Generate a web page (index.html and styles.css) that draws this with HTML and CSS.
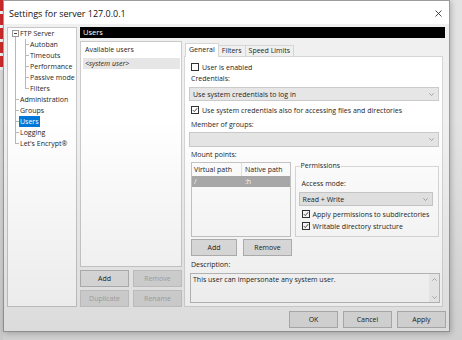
FILE: index.html
```html
<!DOCTYPE html>
<html lang="en">
<head>
    <meta charset="UTF-8">
    <meta name="viewport" content="width=device-width, initial-scale=1.0">
    <title>Settings for server 127.0.0.1</title>
    <link rel="stylesheet" href="styles.css">
</head>
<body>
    <div class="desk-strip"></div>
    <div class="window">
        <div class="titlebar">
            <span class="title">Settings for server 127.0.0.1</span>
            <svg class="close" width="7" height="7" viewBox="0 0 7 7"><path d="M0.5 0.5L6.5 6.5M6.5 0.5L0.5 6.5" stroke="#333" stroke-width="0.9"/></svg>
        </div>
        <div class="content">
            <div class="tree">
                <div class="row root"><span class="expander"></span>FTP Server</div>
                <div class="row child">Autoban</div>
                <div class="row child">Timeouts</div>
                <div class="row child">Performance</div>
                <div class="row child">Passive mode</div>
                <div class="row child last-child">Filters</div>
                <div class="row top">Administration</div>
                <div class="row top">Groups</div>
                <div class="row top"><span class="selected">Users</span></div>
                <div class="row top">Logging</div>
                <div class="row top last">Let's Encrypt®</div>
            </div>
            <div class="main">
                <div class="page-header">Users</div>
                <div class="page">
                    <div class="users-col">
                        <div class="user-list">
                            <div class="list-title">Available users</div>
                            <div class="list-item">&lt;system user&gt;</div>
                        </div>
                        <div class="btn-grid">
                            <button class="btn">Add</button>
                            <button class="btn" disabled>Remove</button>
                            <button class="btn" disabled>Duplicate</button>
                            <button class="btn" disabled>Rename</button>
                        </div>
                    </div>
                    <div class="tabs-col">
                        <div class="tabs">
                            <div class="tab active">General</div>
                            <div class="tab">Filters</div>
                            <div class="tab">Speed Limits</div>
                        </div>
                        <div class="tab-panel">
                            <div class="check"><span class="box"></span>User is enabled</div>
                            <div class="label gap-2">Credentials:</div>
                            <div class="select gap-3">
                                <span>Use system credentials to log in</span>
                                <svg class="chev" width="5" height="3" viewBox="0 0 5 3"><path d="M0.3 0.3L2.5 2.5L4.7 0.3" fill="none" stroke="#8a8a8a" stroke-width="0.7"/></svg>
                            </div>
                            <div class="check gap-4"><span class="box"><svg width="6" height="6" viewBox="0 0 6 6"><path d="M0.8 3.1L2.3 4.6L5.2 1.2" fill="none" stroke="#333" stroke-width="0.9"/></svg></span>Use system credentials also for accessing files and directories</div>
                            <div class="label gap-5">Member of groups:</div>
                            <div class="select gap-2 tall">
                                <span></span>
                                <svg class="chev" width="5" height="3" viewBox="0 0 5 3"><path d="M0.3 0.3L2.5 2.5L4.7 0.3" fill="none" stroke="#8a8a8a" stroke-width="0.7"/></svg>
                            </div>
                            <div class="label gap-3">Mount points:</div>
                            <div class="mount gap-2">
                                <div class="mount-table">
                                    <div class="mt-head"><span class="col1">Virtual path</span><span class="col2">Native path</span></div>
                                    <div class="mt-row selected"><span class="col1">/</span><span class="col2">:h</span></div>
                                </div>
                                <fieldset class="perms">
                                    <legend>Permissions</legend>
                                    <div class="label access">Access mode:</div>
                                    <div class="select perm-select">
                                        <span>Read + Write</span>
                                        <svg class="chev" width="5" height="3" viewBox="0 0 5 3"><path d="M0.3 0.3L2.5 2.5L4.7 0.3" fill="none" stroke="#8a8a8a" stroke-width="0.7"/></svg>
                                    </div>
                                    <div class="check perm-check"><span class="box"><svg width="6" height="6" viewBox="0 0 6 6"><path d="M0.8 3.1L2.3 4.6L5.2 1.2" fill="none" stroke="#333" stroke-width="0.9"/></svg></span>Apply permissions to subdirectories</div>
                                    <div class="check perm-check2"><span class="box"><svg width="6" height="6" viewBox="0 0 6 6"><path d="M0.8 3.1L2.3 4.6L5.2 1.2" fill="none" stroke="#333" stroke-width="0.9"/></svg></span>Writable directory structure</div>
                                </fieldset>
                            </div>
                            <div class="mount-btns">
                                <button class="btn add">Add</button>
                                <button class="btn remove">Remove</button>
                            </div>
                            <div class="label gap-4">Description:</div>
                            <div class="description">
                                <span class="desc-text">This user can impersonate any system user.</span>
                                <div class="scroll">
                                    <svg width="5" height="3" viewBox="0 0 5 3"><path d="M0.3 2.7L2.5 0.5L4.7 2.7" fill="none" stroke="#9a9a9a" stroke-width="0.7"/></svg>
                                    <svg width="5" height="3" viewBox="0 0 5 3"><path d="M0.3 0.3L2.5 2.5L4.7 0.3" fill="none" stroke="#9a9a9a" stroke-width="0.7"/></svg>
                                </div>
                            </div>
                        </div>
                    </div>
                </div>
            </div>
        </div>
        <div class="footer">
            <button class="btn wide">OK</button>
            <button class="btn wide">Cancel</button>
            <button class="btn wide">Apply</button>
        </div>
    </div>
</body>
</html>
```

FILE: styles.css
```css
* {
    box-sizing: border-box;
}
body {
    margin: 0;
    width: 462px;
    height: 340px;
    overflow: hidden;
    position: relative;
    display: flex;
    align-items: flex-start;
    background: #e3e3e3;
    font-family: "Open Sans", sans-serif;
    font-size: 7px;
    color: #1e1e1e;
}
body::after {
    content: "";
    position: absolute;
    inset: 0;
    pointer-events: none;
    background: linear-gradient(to bottom, rgba(0, 0, 0, 0) 35%, rgba(0, 0, 0, 0.09) 100%);
}
.desk-strip {
    width: 3px;
    height: 340px;
    background: repeating-linear-gradient(to bottom, #cf2b2b 0 11px, #f4f4f4 11px 14px) 0 0 / 3px 70px no-repeat, #dcdcdc;
}
.window {
    width: 447px;
    height: 332px;
    border: 1px solid #9c9c9c;
    background: #f0f0f0;
    display: flex;
    flex-direction: column;
    box-shadow: 1px 1px 6px rgba(0, 0, 0, 0.25);
}
.titlebar {
    height: 23px;
    background: #fff;
    display: flex;
    align-items: center;
    justify-content: space-between;
    padding: 1px 7px 0 5px;
    font-size: 9px;
    color: #111;
}
.content {
    display: flex;
    gap: 3px;
    padding: 3px 3px 0 3px;
    height: 283px;
}
.tree {
    width: 70px;
    height: 280px;
    background: #fff;
    border: 1px solid #c6c6c6;
}
.row {
    height: 11px;
    line-height: 11px;
    white-space: nowrap;
}
.row.root {
    display: flex;
    align-items: center;
    padding-left: 4px;
    background: linear-gradient(#b8b8b8, #b8b8b8) 7px 5px / 1px 6px no-repeat;
}
.expander {
    width: 7px;
    height: 7px;
    margin-right: 1px;
    border: 1px solid #999;
    background: linear-gradient(#444, #444) center / 3px 1px no-repeat, #fff;
}
.row.child {
    padding-left: 22px;
    background:
        linear-gradient(#b8b8b8, #b8b8b8) 7px 0 / 1px 11px no-repeat,
        linear-gradient(#b8b8b8, #b8b8b8) 17px 0 / 1px 11px no-repeat,
        linear-gradient(#b8b8b8, #b8b8b8) 17px 5px / 4px 1px no-repeat;
}
.row.child.last-child {
    background:
        linear-gradient(#b8b8b8, #b8b8b8) 7px 0 / 1px 11px no-repeat,
        linear-gradient(#b8b8b8, #b8b8b8) 17px 0 / 1px 6px no-repeat,
        linear-gradient(#b8b8b8, #b8b8b8) 17px 5px / 4px 1px no-repeat;
}
.row.top {
    padding-left: 12px;
    background:
        linear-gradient(#b8b8b8, #b8b8b8) 7px 0 / 1px 11px no-repeat,
        linear-gradient(#b8b8b8, #b8b8b8) 7px 5px / 4px 1px no-repeat;
}
.row.top.last {
    background:
        linear-gradient(#b8b8b8, #b8b8b8) 7px 0 / 1px 6px no-repeat,
        linear-gradient(#b8b8b8, #b8b8b8) 7px 5px / 4px 1px no-repeat;
}
.selected {
    background: #0078d7;
    color: #fff;
    padding: 1px 1px;
    margin-left: -1px;
}
.main {
    width: 365px;
}
.page-header {
    height: 11px;
    line-height: 11px;
    background: #000;
    color: #fff;
    padding-left: 3px;
    font-size: 7.5px;
}
.page {
    display: flex;
    gap: 2px;
    margin-top: 3px;
}
.users-col {
    width: 102px;
}
.user-list {
    height: 226px;
    background: #fff;
    border: 1px solid #cbcbcb;
    padding: 3px 1px 0 2px;
}
.list-title {
    padding-left: 2px;
    line-height: 10px;
}
.list-item {
    margin-top: 3px;
    height: 11px;
    line-height: 11px;
    background: #e6e6e6;
    padding-left: 2px;
    font-style: italic;
}
.btn-grid {
    display: grid;
    grid-template-columns: 49px 49px;
    column-gap: 4px;
    row-gap: 3px;
    margin-top: 3px;
}
.btn {
    height: 17px;
    padding: 0;
    font-family: "Open Sans", sans-serif;
    font-size: 7px;
    color: #1e1e1e;
    background: #e1e1e1;
    border: 1px solid #b4b4b4;
}
.btn:disabled {
    color: #a6a6a6;
    background: #d9d9d9;
    border-color: #c8c8c8;
}
.tabs-col {
    width: 259px;
}
.tabs {
    display: flex;
    align-items: flex-end;
    height: 14px;
    margin-top: 1px;
    padding-left: 1px;
}
.tab {
    height: 11px;
    line-height: 10px;
    padding: 0 3px;
    border: 1px solid #d6d6d6;
    border-bottom: none;
    background: #f0f0f0;
    margin-left: -1px;
}
.tab.active {
    height: 14px;
    line-height: 12px;
    background: #fff;
    position: relative;
    margin-bottom: -1px;
    margin-left: 0;
    z-index: 1;
}
.tab-panel {
    height: 251px;
    background: #fff;
    border: 1px solid #d6d6d6;
    padding: 5px 3px 0 4px;
}
.label {
    line-height: 10px;
    height: 10px;
    padding-left: 2px;
}
.check {
    display: flex;
    align-items: center;
    gap: 3px;
    height: 10px;
    padding-left: 2px;
    white-space: nowrap;
}
.box {
    width: 8px;
    height: 8px;
    border: 1px solid #333;
    background: #fff;
    display: flex;
    align-items: center;
    justify-content: center;
}
.gap-2 { margin-top: 2px; }
.gap-3 { margin-top: 3px; }
.gap-4 { margin-top: 4px; }
.gap-5 { margin-top: 5px; }
.select {
    height: 14px;
    background: #e6e6e6;
    border: 1px solid #cacaca;
    display: flex;
    align-items: center;
    justify-content: space-between;
    padding: 0 4px 0 3px;
}
.select.tall {
    height: 15px;
}
.mount {
    display: flex;
    gap: 4px;
    padding-left: 2px;
}
.mount-table {
    width: 100px;
    height: 75px;
    background: #fff;
    border: 1px solid #c6c6c6;
}
.mt-head {
    display: flex;
    height: 13px;
    line-height: 13px;
}
.mt-head .col1 {
    border-right: 1px solid #e3e3e3;
}
.col1 {
    width: 50px;
    padding-left: 2px;
}
.col2 {
    padding-left: 3px;
}
.mt-row {
    display: flex;
    height: 11px;
    line-height: 11px;
}
.mt-row.selected {
    background: #ababab;
    color: #fff;
    margin: 0;
    padding: 0;
}
.perms {
    width: 145px;
    height: 75px;
    margin: 0;
    padding: 0 4px;
    border: 1px solid #dadada;
}
.perms legend {
    padding: 0 1px;
    line-height: 8px;
}
.access {
    margin-top: 9px;
}
.perm-select {
    margin: 3px 0 0 -1px;
    width: 134px;
}
.perm-check {
    margin-top: 3px;
}
.perm-check2 {
    margin-top: 2px;
}
.mount-btns {
    display: flex;
    gap: 6px;
    margin-top: 2px;
    padding-left: 2px;
}
.mount-btns .add {
    width: 46px;
}
.mount-btns .remove {
    width: 49px;
}
.description {
    margin: 3px 0 0 1px;
    width: 250px;
    height: 30px;
    border: 1px solid #bdbdbd;
    background: #fff;
    display: flex;
    justify-content: space-between;
}
.desc-text {
    padding: 1px 0 0 2px;
    line-height: 10px;
}
.scroll {
    width: 10px;
    background: #f3f3f3;
    display: flex;
    flex-direction: column;
    justify-content: space-between;
    align-items: center;
    padding: 4px 0 3px;
}
.footer {
    display: flex;
    justify-content: flex-end;
    gap: 5px;
    padding: 4px 3px 0 0;
}
.btn.wide {
    width: 49px;
}
```
